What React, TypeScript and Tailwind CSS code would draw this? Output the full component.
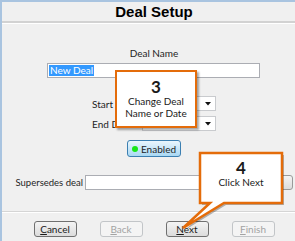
import React from "react";

const ui = { fontFamily: "Lato, 'Noto Sans', sans-serif" };
const callFont = { fontFamily: "Lato, 'Open Sans', sans-serif" };

function Btn({ label, u, disabled }: { label: string; u: number; disabled?: boolean }) {
  const pre = label.slice(0, u);
  const ch = label[u];
  const post = label.slice(u + 1);
  return (
    <div
      className={
        disabled
          ? "w-[43px] h-[16px] rounded-[3px] border border-[#c2c5c8] bg-[#f4f4f4] text-[#a3a3a3] flex items-center justify-center text-[10px] leading-none"
          : "w-[43px] h-[16px] rounded-[3px] border border-[#707070] bg-gradient-to-b from-[#f4f4f4] to-[#dcdcdc] text-[#1a1a1a] flex items-center justify-center text-[10px] leading-none"
      }
    >
      <span>
        {pre}
        <span className="underline">{ch}</span>
        {post}
      </span>
    </div>
  );
}

function Drop() {
  return (
    <div className="w-[74px] h-[15px] border border-[#c9cbce] bg-white flex items-center justify-end pr-[4px]">
      <svg width="6" height="4" viewBox="0 0 6 4">
        <path d="M0 0 H6 L3 3.5 Z" fill="#111" />
      </svg>
    </div>
  );
}

export default function App() {
  return (
    <div className="w-[295px] h-[241px] overflow-hidden relative bg-[#f0f0f0]">
      <div
        className="w-[306px] h-[241px] flex flex-col border-l-2 border-t-2 border-[#a9c4e0] bg-[#f0f0f0] text-[#1e1e1e]"
        style={ui}
      >
        <div
          className="h-[19px] flex items-center justify-center text-[15px] font-bold leading-none text-black"
          style={{ fontFamily: "'Liberation Sans', Arial, sans-serif" }}
        >
          Deal Setup
        </div>
        <div className="h-[2px] bg-[#d2d2d2]" />
        <div className="h-[1px] bg-white" />

        <div className="mt-[22px] text-center text-[10px] leading-[14px]">Deal Name</div>
        <div className="mt-[3px] ml-[45px] w-[213px] h-[15px] border border-[#abadb3] bg-white flex items-center pl-[1px]">
          <span className="bg-[#3399ff] text-white text-[10px] leading-[11px] px-[1px]">New Deal</span>
        </div>

        <div className="mt-[18px] flex justify-center items-center gap-[2px]">
          <div className="w-[48px] text-[10px] leading-none whitespace-nowrap">Start Date</div>
          <Drop />
        </div>
        <div className="mt-[5px] flex justify-center items-center gap-[2px]">
          <div className="w-[48px] text-[10px] leading-none whitespace-nowrap">End Date</div>
          <Drop />
        </div>

        <div className="mt-[9px] self-center w-[54px] h-[17px] rounded-[3px] border border-[#3c7fb1] bg-gradient-to-b from-[#eaf6fd] to-[#a9d8f3] flex items-center justify-center gap-[3px] text-[10px] leading-none">
          <span className="w-[6px] h-[6px] rounded-full bg-[#19e619]" />
          <span>Enabled</span>
        </div>

        <div className="mt-[18px] h-[15px] flex justify-center items-center">
          <div className="w-[66px] text-[9.5px] leading-none whitespace-nowrap">Supersedes deal</div>
          <div className="ml-[3px] w-[195px] h-[15px] border border-[#abadb3] bg-white" />
          <div className="ml-[1px] w-[12px] h-[15px] rounded-r-[3px] border border-[#9a9a9a] bg-gradient-to-b from-[#f4f4f4] to-[#dcdcdc]" />
        </div>

        <div className="mt-[21px] h-[1px] bg-[#d5d5d5]" />
        <div className="h-[1px] bg-white" />

        <div className="mt-[8px] flex justify-center gap-[23px]">
          <Btn label="Cancel" u={0} />
          <Btn label="Back" u={0} disabled />
          <Btn label="Next" u={0} />
          <Btn label="Finish" u={0} disabled />
        </div>
      </div>

      {/* Callout 3 */}
      <div
        className="absolute left-[115px] top-[70px] w-[82px] h-[58px] border-2 border-[#e46c0a] bg-white shadow-[2px_2px_2px_rgba(0,0,0,0.35)] flex flex-col items-center pt-[7px] text-[#1a1a1a]"
        style={callFont}
      >
        <div className="text-[17px] font-bold leading-[16px]">3</div>
        <div className="text-[10px] leading-[12px] whitespace-nowrap">Change Deal</div>
        <div className="text-[10px] leading-[12px] whitespace-nowrap">Name or Date</div>
      </div>

      {/* Callout 4 */}
      <svg className="absolute left-[176px] top-[150px]" width="119" height="85" viewBox="0 0 119 85">
        <path
          d="M24 3 H106 V53 H48 L7 78 L34 53 H24 Z"
          transform="translate(2 2)"
          fill="rgba(0,0,0,0.28)"
        />
        <path
          d="M24 3 H106 V53 H48 L7 78 L34 53 H24 Z"
          fill="#ffffff"
          stroke="#e46c0a"
          strokeWidth="2.5"
          strokeLinejoin="miter"
        />
      </svg>
      <div
        className="absolute left-[200px] top-[153px] w-[82px] h-[50px] flex flex-col items-center pt-[7px] text-[#1a1a1a]"
        style={callFont}
      >
        <div className="text-[17px] font-bold leading-[16px]">4</div>
        <div className="text-[10px] leading-[12px] whitespace-nowrap">Click Next</div>
      </div>
    </div>
  );
}
